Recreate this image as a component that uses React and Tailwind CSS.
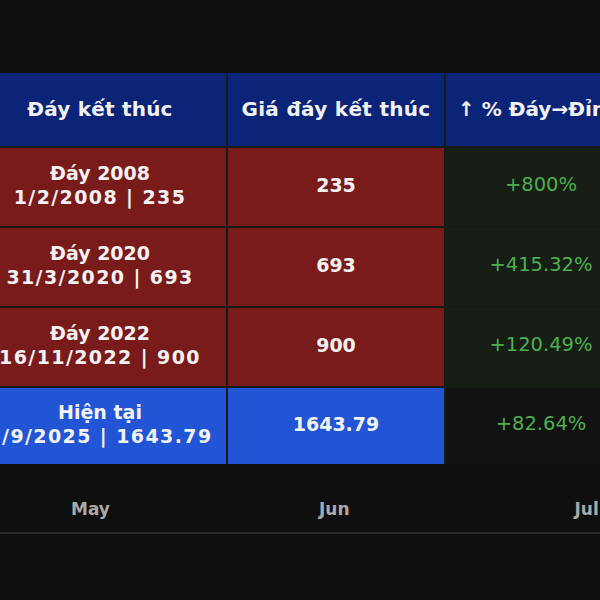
import React from 'react';

const rows = [
  { name: 'Đáy 2008', sub: '1/2/2008 | 235', price: '235', pct: '+800%', tone: 'red' },
  { name: 'Đáy 2020', sub: '31/3/2020 | 693', price: '693', pct: '+415.32%', tone: 'red' },
  { name: 'Đáy 2022', sub: '16/11/2022 | 900', price: '900', pct: '+120.49%', tone: 'red' },
  { name: 'Hiện tại', sub: '5/9/2025 | 1643.79', price: '1643.79', pct: '+82.64%', tone: 'blue' },
];

export default function App() {
  return (
    <div
      className="w-[600px] h-[600px] overflow-hidden bg-[#0f0f0f] text-[#f2f2f2]"
      style={{ fontFamily: '"DejaVu Sans", "Noto Sans", sans-serif' }}
    >
      <div className="pt-[73px] ml-[-26px]">
        {/* Table */}
        <div className="grid grid-cols-[252px_216px_200px] gap-[2px] bg-[#161b16] w-[672px]">
          <div className="h-[73px] pb-[2px] bg-[#0c2478] flex items-center justify-center text-[20px] tracking-[0.2px] font-semibold">
            Đáy kết thúc
          </div>
          <div className="h-[73px] pb-[2px] bg-[#0c2478] flex items-center justify-center text-[20px] tracking-[0.3px] font-semibold">
            Giá đáy kết thúc
          </div>
          <div className="h-[73px] pb-[2px] bg-[#0c2478] flex items-center pl-[12px] text-[20px] font-semibold whitespace-nowrap">
            ↑ % Đáy→Đỉnh
          </div>

          {rows.map((r, i) => {
            const last = i === rows.length - 1;
            const bg = r.tone === 'blue' ? 'bg-[#2155d6]' : 'bg-[#7a1b1b]';
            return (
              <React.Fragment key={r.name}>
                <div className={`${last ? 'h-[76px]' : 'h-[78px]'} pb-[5px] ${bg} flex flex-col items-center justify-center text-[19px] leading-[24px] font-bold whitespace-nowrap`}>
                  <span>{r.name}</span>
                  <span className="tracking-[1.4px]">{r.sub}</span>
                </div>
                <div className={`${bg} pb-[4px] flex items-center justify-center text-[19px] font-bold`}>
                  {r.price}
                </div>
                <div
                  className={`${last ? 'bg-[#121212]' : 'bg-[#161e16]'} pb-[4px] flex items-center justify-center pr-[10px] text-[19.5px] text-[#4caf50]`}
                >
                  {r.pct}
                </div>
              </React.Fragment>
            );
          })}
        </div>
      </div>

      {/* Time axis */}
      <div className="h-[70px] border-b-2 border-[#2a2a2a]">
        <div className="flex pt-[33px] text-[17px] font-semibold text-[#a9a9a9]">
          <span className="ml-[71px]">May</span>
          <span className="ml-[209px]">Jun</span>
          <span className="ml-[225px]">Jul</span>
        </div>
      </div>
    </div>
  );
}
